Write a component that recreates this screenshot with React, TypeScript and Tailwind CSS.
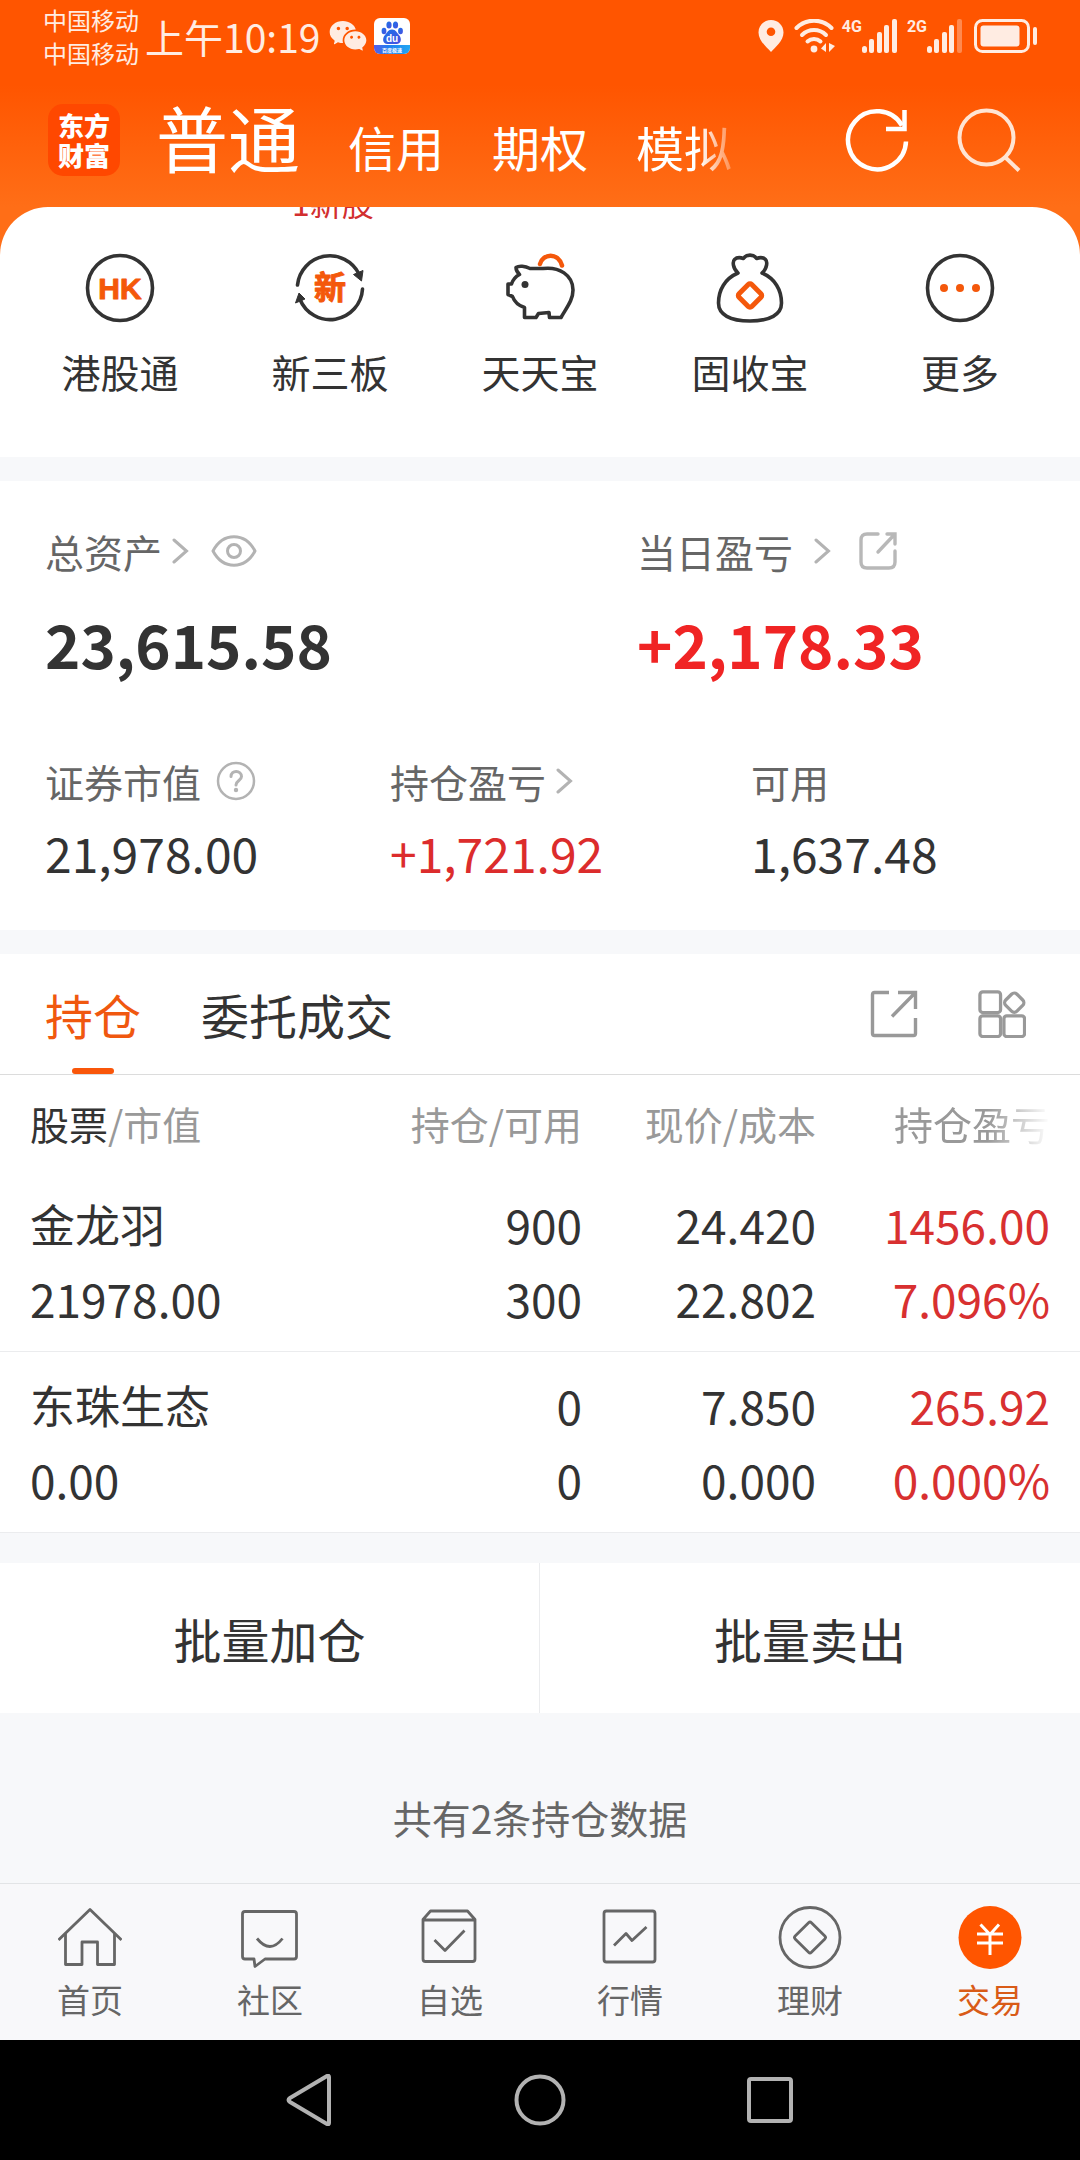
import React from "react";
import { RiWechatFill } from "react-icons/ri";

type IconProps = { className?: string };

/* ---------- status bar icons ---------- */

function BaiduIcon() {
  return (
    <svg className="h-9 w-9" viewBox="0 0 36 36" aria-hidden="true">
      <defs>
        <linearGradient id="paw" x1="0" y1="0" x2="1" y2="1">
          <stop offset="0" stopColor="#1a73e8" />
          <stop offset="1" stopColor="#4a4fe0" />
        </linearGradient>
        <linearGradient id="strip" x1="0" y1="0" x2="1" y2="0">
          <stop offset="0" stopColor="#5b5ce6" />
          <stop offset="0.4" stopColor="#1f7ff0" />
          <stop offset="1" stopColor="#22a7f2" />
        </linearGradient>
        <clipPath id="tile">
          <rect width="36" height="36" rx="6" />
        </clipPath>
      </defs>
      <g clipPath="url(#tile)">
        <rect width="36" height="36" fill="#fff" />
        <rect y="27" width="36" height="9" fill="url(#strip)" />
        <g fill="url(#paw)">
          <ellipse cx="15" cy="7" rx="2.6" ry="3.5" />
          <ellipse cx="21.5" cy="7" rx="2.6" ry="3.5" />
          <ellipse cx="10" cy="13" rx="2.4" ry="3.3" />
          <ellipse cx="26.5" cy="13" rx="2.4" ry="3.3" />
          <path d="M18 11.5c4 0 5 3.500 7 5.500 3 3 2.500 9-2.500 9h-9c-5 0-5.500-6-2.500-9 2-2 3-5.500 7-5.500z" />
        </g>
        <text x="18" y="24" textAnchor="middle" fontSize="10" fontWeight="700" fill="#fff" fontFamily="Liberation Sans, sans-serif">
          du
        </text>
        <text x="18" y="34" textAnchor="middle" fontSize="5" fontWeight="700" fill="#fff" fontFamily="Noto Sans CJK SC, sans-serif">
          百度极速
        </text>
      </g>
    </svg>
  );
}

function PinIcon() {
  return (
    <svg className="h-8 w-[26px]" viewBox="0 0 26 32" aria-hidden="true">
      <path
        fill="currentColor"
        fillRule="evenodd"
        d="M13 0C5.800 0 .5 5.500.5 12.500.5 21 9 27.500 13 32c4-4.500 12.500-11 12.500-19.500C25.500 5.500 20.200 0 13 0zm0 7.500a4.300 4.300 0 1 1 0 8.600 4.300 4.300 0 0 1 0-8.600z"
      />
    </svg>
  );
}

function WifiIcon() {
  return (
    <svg className="h-[34px] w-[42px]" viewBox="0 0 42 34" fill="none" stroke="currentColor" strokeWidth="4" strokeLinecap="round" aria-hidden="true">
      <path d="M2.500 9a24.500 24.500 0 0 1 35 0" />
      <path d="M8 16a17 17 0 0 1 24 0" />
      <path d="M13.500 22.500a9.500 9.500 0 0 1 13 0" />
      <circle cx="20" cy="30" r="3.400" fill="currentColor" stroke="none" />
      <path d="M32 24v9l-5-3.500zM35 24v9l6-6z" fill="currentColor" stroke="none" />
    </svg>
  );
}

function SignalIcon({ weak = false }: { weak?: boolean }) {
  return (
    <svg className="h-[34px] w-[35px]" viewBox="0 0 35 34" fill="currentColor" aria-hidden="true">
      <rect x="0" y="27" width="5" height="7" rx="2.500" />
      <rect x="7" y="20" width="5" height="14" rx="2" />
      <rect x="15" y="13" width="5" height="21" rx="2" />
      <rect x="22" y="6" width="5" height="28" rx="2" />
      <rect x="30" y="0" width="5" height="34" rx="2" opacity={weak ? 0.35 : 1} />
    </svg>
  );
}

function BatteryIcon() {
  return (
    <svg className="h-[34px] w-16" viewBox="0 0 64 34" fill="none" aria-hidden="true">
      <rect x="1.500" y="1.500" width="53" height="31" rx="7" stroke="currentColor" strokeWidth="3" />
      <rect x="6.500" y="6.500" width="39" height="21" rx="3" fill="currentColor" />
      <rect x="59" y="8" width="4" height="18" rx="2" fill="currentColor" />
    </svg>
  );
}

/* ---------- header icons ---------- */

function RefreshIcon() {
  return (
    <svg className="h-[64px] w-[64px]" viewBox="0 0 64 64" fill="none" stroke="#fff" strokeWidth="4.500" aria-hidden="true">
      <path d="M61 33.500A29 29 0 1 1 57 17.500" />
      <path d="M59.500 2v19H41" />
    </svg>
  );
}

function SearchIcon() {
  return (
    <svg className="h-[64px] w-[64px]" viewBox="0 0 64 64" fill="none" stroke="#ffe4d3" strokeWidth="4" aria-hidden="true">
      <circle cx="29.500" cy="29.500" r="27" />
      <path d="M48.500 49.500 62 62.500" />
    </svg>
  );
}

/* ---------- service icons ---------- */

const inkStroke = { fill: "none", stroke: "#333", strokeWidth: 3.6, strokeLinejoin: "round" as const, strokeLinecap: "round" as const };

function HkIcon() {
  return (
    <svg className="size-[70px]" viewBox="0 0 70 70" aria-hidden="true">
      <circle cx="35" cy="35" r="32.500" {...inkStroke} />
      <text x="35" y="46" textAnchor="middle" fontSize="30" fontWeight="700" fill="#f4580b" stroke="#f4580b" strokeWidth="1" strokeLinejoin="round" fontFamily="Liberation Sans, sans-serif">
        HK
      </text>
    </svg>
  );
}

function NewBoardIcon() {
  return (
    <svg className="size-[70px]" viewBox="0 0 70 70" aria-hidden="true">
      <path d="M2.500 32A32.500 32.500 0 0 1 64 21" {...inkStroke} />
      <path d="M67.500 36A32.500 32.500 0 0 1 5 46.500" {...inkStroke} />
      <path d="M58.500 21.500 68 17.500 66.500 28z M.5 50 4 40 10 46z" fill="#333" stroke="#333" strokeLinejoin="round" />
      <text x="35" y="46" textAnchor="middle" fontSize="32" fontWeight="700" fill="#f4580b" stroke="#f4580b" strokeWidth="1" strokeLinejoin="round" fontFamily="Noto Sans CJK SC, sans-serif">
        新
      </text>
    </svg>
  );
}

function PiggyIcon() {
  return (
    <svg className="size-[70px]" viewBox="0 0 70 70" aria-hidden="true">
      <path
        {...inkStroke}
        d="M11 14.500C14 12.500 20 13 25 15.500H38C54 13.500 68 22 68 37 68 47 62 54 56 64.500H44.500L44 59.500 33.500 60.500 31 64.500H19.500V54.500C13 52.500 9.500 49 7.500 43.500L3 41.500V31H6.500C8 26.500 10.500 23.500 14.500 21.500 12.500 19.500 11 17.500 11 14.500Z"
      />
      <circle cx="20" cy="31.500" r="3.500" fill="#333" />
      <path d="M35 11C38 .5 53-1 57 12.500" fill="none" stroke="#f4580b" strokeWidth="4.500" strokeLinecap="round" />
    </svg>
  );
}

function MoneyBagIcon() {
  return (
    <svg className="size-[70px]" viewBox="0 0 70 70" aria-hidden="true">
      <path
        {...inkStroke}
        d="M23 20C17.500 15 17.500 8.500 19.500 6.500 22 4 26 4.500 28.500 5.500 31 1 39 1 41.500 5.500 44 4.500 48 4 50.500 6.500 52.500 8.500 52.500 15 47 20 60 25.500 66.500 37 66.500 50 66.500 61.500 55 68 35 68S3.500 61.500 3.500 50C3.500 37 10 25.500 23 20Z"
      />
      <rect x="26" y="33.500" width="18" height="18" rx="2.500" transform="rotate(45 35 42.500)" fill="none" stroke="#f4580b" strokeWidth="5" />
    </svg>
  );
}

function MoreIcon() {
  return (
    <svg className="size-[70px]" viewBox="0 0 70 70" aria-hidden="true">
      <circle cx="35" cy="35" r="32.500" {...inkStroke} />
      <g fill="#f4580b">
        <circle cx="19" cy="35" r="4" />
        <circle cx="35" cy="35" r="4" />
        <circle cx="51" cy="35" r="4" />
      </g>
    </svg>
  );
}

/* ---------- small icons ---------- */

function Chevron({ className = "" }: IconProps) {
  return (
    <svg className={`h-[26px] w-[18px] ${className}`} viewBox="0 0 18 26" fill="none" stroke="#b3b3b3" strokeWidth="3" strokeLinecap="round" aria-hidden="true">
      <path d="M3 2 15.500 13 3 24" />
    </svg>
  );
}

function EyeIcon() {
  return (
    <svg className="h-8 w-[46px]" viewBox="0 0 46 32" fill="none" stroke="#b3b3b3" strokeWidth="3" aria-hidden="true">
      <path d="M2 16C12-3 34-3 44 16 34 35 12 35 2 16Z" strokeLinejoin="round" />
      <circle cx="23" cy="16" r="6.500" />
    </svg>
  );
}

function ShareSmallIcon() {
  return (
    <svg className="size-[38px]" viewBox="0 0 38 38" fill="none" stroke="#b8b8b8" strokeWidth="3.400" strokeLinecap="round" aria-hidden="true">
      <path d="M19 2H8Q2 2 2 8V30Q2 36 8 36H30Q36 36 36 30V19" />
      <path d="M28 2H36V12M35 3 19 20" />
    </svg>
  );
}

function HelpIcon() {
  return (
    <svg className="size-10" viewBox="0 0 40 40" fill="none" stroke="#b3b3b3" strokeWidth="2.500" strokeLinecap="round" aria-hidden="true">
      <circle cx="20" cy="20" r="18" />
      <path d="M15 15.500C15 8.500 25.500 9 25.500 15.500 25.500 19.500 20 19.500 20 24" strokeWidth="3" />
      <circle cx="20" cy="29" r="2.200" fill="#b3b3b3" stroke="none" />
    </svg>
  );
}

function ShareLargeIcon() {
  return (
    <svg className="size-12" viewBox="0 0 48 48" fill="none" stroke="#999" strokeWidth="3.400" aria-hidden="true">
      <path d="M19 2.500H4.500Q2.500 2.500 2.500 4.500V43.500Q2.500 45.500 4.500 45.500H43.500Q45.500 45.500 45.500 43.500V28" />
      <path d="M28 2.500H45.500V19M45 3 22 26.500" />
    </svg>
  );
}

function GridIcon() {
  return (
    <svg className="size-12" viewBox="0 0 50 50" fill="none" stroke="#999" strokeWidth="3.400" aria-hidden="true">
      <rect x="2" y="2" width="21.500" height="21.500" rx="3" />
      <rect x="2" y="27" width="21.500" height="21.500" rx="3" />
      <rect x="27" y="27" width="21.500" height="21.500" rx="3" />
      <rect x="29.500" y="5" width="16.500" height="16.500" rx="4" transform="rotate(45 37.750 13.250)" />
    </svg>
  );
}

/* ---------- bottom navigation icons ---------- */

const navStroke = { fill: "none", stroke: "#666", strokeWidth: 2.8, strokeLinejoin: "round" as const };

const navItems = [
  {
    label: "首页",
    icon: (
      <g {...navStroke}>
        <path d="M.5 35 32 4.500 63.500 35" />
        <path d="M7.500 28.500V59.500H24V37H39.500V59.500H56.500V28.500" />
      </g>
    ),
  },
  {
    label: "社区",
    icon: (
      <g {...navStroke}>
        <path d="M7 6.500H56Q58.500 6.500 58.500 9V51.500Q58.500 54 56 54H27L17 61.500 16 54H7Q4.500 54 4.500 51.500V9Q4.500 6.500 7 6.500Z" />
        <path d="M19 33.500Q32 49.500 44.500 33.500" />
      </g>
    ),
  },
  {
    label: "自选",
    icon: (
      <g {...navStroke}>
        <path d="M5 14.500 12.500 6H49.500L57 14.500V54Q57 56.500 54.500 56.500H7.500Q5 56.500 5 54ZM5 15H57" />
        <path d="M16.500 35 27 45.500 46.500 25.500" />
      </g>
    ),
  },
  {
    label: "行情",
    icon: (
      <g {...navStroke}>
        <rect x="6" y="6" width="51" height="51" rx="2.500" />
        <path d="M16 40.500 28 28.500 34 35.500 48.500 22" />
      </g>
    ),
  },
  {
    label: "理财",
    icon: (
      <g {...navStroke}>
        <circle cx="32" cy="32.500" r="30" />
        <rect x="20.500" y="21" width="23" height="23" rx="2" transform="rotate(45 32 32.500)" />
      </g>
    ),
  },
  {
    label: "交易",
    active: true,
    icon: (
      <g>
        <circle cx="32" cy="32.500" r="31.500" fill="#f50" />
        <path d="M22.500 19.500 32 29.500 41 19.500M32 29.500V50M19 29H45M19 38H45" fill="none" stroke="#fff" strokeWidth="3" />
      </g>
    ),
  },
];

const services = [
  { label: "港股通", icon: <HkIcon /> },
  { label: "新三板", icon: <NewBoardIcon />, badge: "1新股" },
  { label: "天天宝", icon: <PiggyIcon /> },
  { label: "固收宝", icon: <MoneyBagIcon /> },
  { label: "更多", icon: <MoreIcon /> },
];

const holdings = [
  { name: "金龙羽", value: "21978.00", held: "900", usable: "300", price: "24.420", cost: "22.802", profit: "1456.00", rate: "7.096%" },
  { name: "东珠生态", value: "0.00", held: "0", usable: "0", price: "7.850", cost: "0.000", profit: "265.92", rate: "0.000%" },
];

function StatusBar() {
  return (
    <div className="flex h-[72px] items-center justify-between pr-[42px] pl-[43px] text-[#ffece2]">
      <div className="flex items-center">
        <div className="text-[24px] leading-[33px]">
          <div>中国移动</div>
          <div>中国移动</div>
        </div>
        <span className="ml-[6px] text-[39px] leading-[66px]">上午10:19</span>
        <RiWechatFill className="ml-2 size-[40px]" aria-label="微信" />
        <span className="ml-[6px]">
          <BaiduIcon />
        </span>
      </div>
      <div className="flex items-center">
        <PinIcon />
        <span className="ml-[10px]">
          <WifiIcon />
        </span>
        <span className="ml-[6px] flex items-start">
          <span className="font-[Roboto,sans-serif] text-[16px] leading-[16px] font-bold">4G</span>
          <SignalIcon />
        </span>
        <span className="ml-[10px] flex items-start">
          <span className="font-[Roboto,sans-serif] text-[16px] leading-[16px] font-bold">2G</span>
          <SignalIcon weak />
        </span>
        <span className="ml-3">
          <BatteryIcon />
        </span>
      </div>
    </div>
  );
}

function Header() {
  return (
    <header className="flex h-[135px] items-center pr-[59px] pl-[48px] text-white">
      <div className="flex size-[72px] items-center justify-center rounded-[15px] bg-[#ff4800] text-center text-[26px] leading-[30px] font-black">
        <span>
          东方
          <br />
          财富
        </span>
      </div>
      <nav className="ml-9 flex flex-1 items-baseline gap-12 pt-[2px] text-[48px] leading-[72px]" aria-label="账户类型">
        <button type="button" className="text-[72px]">普通</button>
        <button type="button">信用</button>
        <button type="button">期权</button>
        <button type="button" className="[mask-image:linear-gradient(to_right,black_66%,transparent_112%)]">模拟</button>
      </nav>
      <div className="flex items-center gap-12">
        <button type="button" aria-label="刷新"><RefreshIcon /></button>
        <button type="button" aria-label="搜索"><SearchIcon /></button>
      </div>
    </header>
  );
}

function Services() {
  return (
    <section className="grid h-[250px] grid-cols-5 overflow-hidden rounded-t-[48px] bg-white px-[15px]">
      {services.map((s) => (
        <a key={s.label} href="#" className="relative flex flex-col items-center pt-[46px]">
          {s.badge && (
            <span className="absolute -top-[21px] right-0 left-0 pl-[6px] text-center text-[32px] leading-[32px] text-[#d22f2f]">
              {s.badge}
            </span>
          )}
          {s.icon}
          <span className="mt-6 text-[39px] leading-[48px] text-[#333]">{s.label}</span>
        </a>
      ))}
    </section>
  );
}

function Assets() {
  return (
    <section className="bg-white px-[45px] pt-[40px] pb-[42px]">
      <div className="grid grid-cols-[592fr_398fr]">
        <div>
          <div className="flex h-[60px] items-center text-[39px] leading-[60px] text-[#666]">
            总资产
            <Chevron className="ml-[9px]" />
            <button type="button" aria-label="显示或隐藏资产" className="ml-[22px]"><EyeIcon /></button>
          </div>
          <div className="mt-5 text-[60px] leading-[84px] font-bold text-[#333]">23,615.58</div>
        </div>
        <div>
          <div className="flex h-[60px] items-center text-[39px] leading-[60px] text-[#666]">
            当日盈亏
            <Chevron className="ml-5" />
            <button type="button" aria-label="分享当日盈亏" className="ml-[28px]"><ShareSmallIcon /></button>
          </div>
          <div className="mt-5 text-[60px] leading-[84px] font-bold text-[#f02424]">+2,178.33</div>
        </div>
      </div>
      <div className="mt-[66px] grid grid-cols-[345fr_361fr_284fr] text-[39px] text-[#666]">
        <div>
          <div className="flex h-[60px] items-center leading-[60px]">
            证券市值
            <button type="button" aria-label="说明" className="ml-[15px]"><HelpIcon /></button>
          </div>
          <div className="mt-[5px] text-[48px] leading-[72px] text-[#333]">21,978.00</div>
        </div>
        <div>
          <div className="flex h-[60px] items-center leading-[60px]">
            持仓盈亏
            <Chevron className="ml-[9px]" />
          </div>
          <div className="mt-[5px] text-[48px] leading-[72px] text-[#dc2c2c]">+1,721.92</div>
        </div>
        <div>
          <div className="flex h-[60px] items-center leading-[60px]">可用</div>
          <div className="mt-[5px] text-[48px] leading-[72px] text-[#333]">1,637.48</div>
        </div>
      </div>
    </section>
  );
}

function HoldingsTabs() {
  return (
    <div className="flex h-[121px] items-stretch border-b border-[#dcdcdc] bg-white pr-[54px] pl-[45px] text-[48px] text-[#333]">
      <div role="tablist" className="flex gap-[60px]">
        <button type="button" role="tab" aria-selected="true" className="relative text-[#f0580f]">
          持仓
          <span className="absolute bottom-0 left-1/2 h-[6px] w-[42px] -translate-x-1/2 rounded-full bg-[#f9560a]" />
        </button>
        <button type="button" role="tab" aria-selected="false">委托成交</button>
      </div>
      <div className="ml-auto flex items-center gap-[60px]">
        <button type="button" aria-label="分享持仓"><ShareLargeIcon /></button>
        <button type="button" aria-label="布局"><GridIcon /></button>
      </div>
    </div>
  );
}

function TwoLines({ top, bottom }: { top: string; bottom: string }) {
  return (
    <>
      <div>{top}</div>
      <div>{bottom}</div>
    </>
  );
}

function HoldingsTable() {
  return (
    <table className="w-full table-fixed border-collapse bg-white text-right text-[46px] leading-[74px] text-[#333]">
      <colgroup>
        <col />
        <col className="w-[249px]" />
        <col className="w-[234px]" />
        <col className="w-[264px]" />
      </colgroup>
      <thead>
        <tr className="h-24 text-[39px] leading-[60px] text-[#999]">
          <th scope="col" className="pl-[30px] text-left font-normal">
            <span className="text-[#333]">股票</span>/市值
          </th>
          <th scope="col" className="font-normal">持仓/可用</th>
          <th scope="col" className="font-normal">现价/成本</th>
          <th scope="col" className="pr-[30px] font-normal">
            <span className="[mask-image:linear-gradient(to_right,black_60%,transparent)]">持仓盈亏</span>
          </th>
        </tr>
      </thead>
      <tbody>
        {holdings.map((h) => (
          <tr key={h.name} className="border-b border-[#ebecee]">
            <td className="py-4 pl-[30px] text-left">
              <div className="text-[45px]">{h.name}</div>
              <div>{h.value}</div>
            </td>
            <td className="py-4"><TwoLines top={h.held} bottom={h.usable} /></td>
            <td className="py-4"><TwoLines top={h.price} bottom={h.cost} /></td>
            <td className="py-4 pr-[30px] text-[#d83030]"><TwoLines top={h.profit} bottom={h.rate} /></td>
          </tr>
        ))}
      </tbody>
    </table>
  );
}

function BottomNav() {
  return (
    <nav className="mt-auto grid h-[157px] grid-cols-6 border-t border-[#e2e4e6] bg-[#f8f8fa]" aria-label="主导航">
      {navItems.map((n) => (
        <a key={n.label} href="#" className="flex flex-col items-center pt-[21px]" aria-current={n.active ? "page" : undefined}>
          <svg className="size-16" viewBox="0 0 64 64" aria-hidden="true">{n.icon}</svg>
          <span className={`mt-[10px] text-[33px] leading-[40px] ${n.active ? "text-[#d95b17]" : "text-[#666]"}`}>{n.label}</span>
        </a>
      ))}
    </nav>
  );
}

function SystemBar() {
  return (
    <div className="flex h-[120px] items-center justify-center gap-[178px] bg-black">
      <button type="button" aria-label="返回">
        <svg className="size-[52px]" viewBox="0 0 52 52" fill="none" stroke="#b2b2b2" strokeWidth="4" strokeLinejoin="round">
          <path d="M45 3V49Q45 51 43 50L6 28Q3 26 6 24L43 2Q45 1 45 3Z" />
        </svg>
      </button>
      <button type="button" aria-label="主屏幕">
        <svg className="size-[52px]" viewBox="0 0 52 52" fill="none" stroke="#b2b2b2" strokeWidth="4">
          <circle cx="26" cy="26" r="23.500" />
        </svg>
      </button>
      <button type="button" aria-label="最近任务">
        <svg className="size-[52px]" viewBox="0 0 52 52" fill="none" stroke="#b2b2b2" strokeWidth="4">
          <rect x="5" y="5" width="42" height="42" rx="2" />
        </svg>
      </button>
    </div>
  );
}

export default function App() {
  return (
    <div className="flex min-h-screen w-full flex-col bg-[#f7f8fa] font-['Noto_Sans_CJK_SC',sans-serif] whitespace-nowrap">
      <div className="bg-[linear-gradient(to_bottom,#ff5500_85px,#ff6e17_207px)]">
        <StatusBar />
        <Header />
        <Services />
      </div>
      <main className="mt-6">
        <Assets />
        <section className="mt-6">
          <HoldingsTabs />
          <HoldingsTable />
        </section>
        <div className="mt-[30px] grid h-[150px] grid-cols-2 bg-white text-[48px] text-[#333]">
          <button type="button" className="border-r border-[#ebecee]">批量加仓</button>
          <button type="button">批量卖出</button>
        </div>
        <p className="mt-[74px] text-center text-[39px] leading-[60px] text-[#666]">共有2条持仓数据</p>
      </main>
      <BottomNav />
      <SystemBar />
    </div>
  );
}
